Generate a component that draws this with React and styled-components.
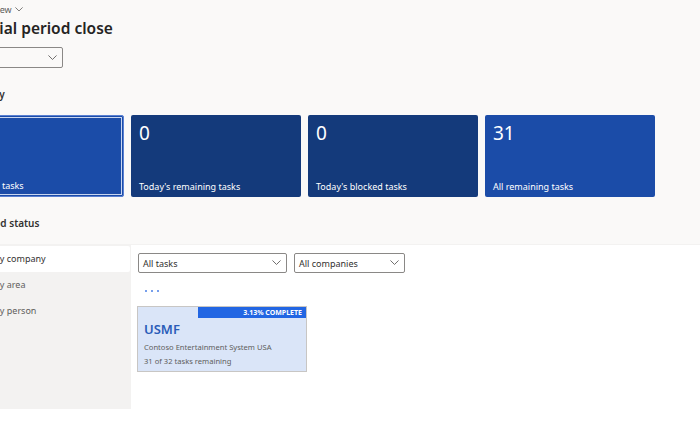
import React from "react";
import styled, { createGlobalStyle } from "styled-components";

const GlobalStyle = createGlobalStyle`
  html, body {
    margin: 0;
    padding: 0;
    background: #faf9f8;
  }
  body {
    font-family: "Noto Sans", "Open Sans", sans-serif;
    color: #323130;
  }
`;

const Viewport = styled.div`
  width: 700px;
  height: 441px;
  overflow: hidden;
  display: flex;
  flex-direction: column;
`;

/* the workspace is scrolled a little to the right, so its left edge sits off screen */
const Content = styled.div`
  margin-left: -60px;
  width: 760px;
  flex: 1;
  display: flex;
  flex-direction: column;
`;

const Breadcrumb = styled.div`
  margin: 3px 0 0 12px;
  height: 13px;
  line-height: 13px;
  font-size: 9px;
  color: #605e5c;
  display: flex;
  align-items: center;
  gap: 3px;
`;

const Title = styled.h1`
  margin: 0 0 0 10px;
  height: 24px;
  line-height: 24px;
  font-size: 15.5px;
  font-weight: 600;
  color: #252423;
`;

const Select = styled.div`
  box-sizing: border-box;
  width: ${(p) => p.$width}px;
  height: ${(p) => p.$height || 20}px;
  border: 1px solid #8a8886;
  border-radius: 2px;
  background: #fff;
  display: flex;
  align-items: center;
  justify-content: space-between;
  padding: 0 5px 0 4px;
  font-size: 9px;
  color: #323130;
`;

const ViewSelect = styled(Select)`
  margin-top: 7px;
  background: #faf9f8;
`;

const SectionHeading = styled.h2`
  margin: ${(p) => p.$top}px 0 0 ${(p) => p.$offset || 0}px;
  height: 18px;
  line-height: 18px;
  font-size: 10px;
  font-weight: 600;
  color: #323130;
`;

const Tiles = styled.div`
  margin: 12px 0 0 14px;
  display: flex;
  gap: 7px;
`;

const Tile = styled.div`
  box-sizing: border-box;
  width: 170px;
  height: 82px;
  border-radius: 2px;
  background: ${(p) => (p.$light ? "#1b4ca8" : "#143a7b")};
  color: #fff;
  padding: 5px 8px 4px;
  display: flex;
  flex-direction: column;
  justify-content: space-between;
  ${(p) =>
    p.$focused &&
    `
    border: 1px solid #5a80d2;
    box-shadow: inset 0 0 0 1px #1b4ca8, inset 0 0 0 2px #c9d6f1;
  `}
`;

const TileCount = styled.div`
  font-size: 19px;
  line-height: 26px;
  height: 26px;
`;

const TileLabel = styled.div`
  font-size: 9px;
  line-height: 12px;
`;

const StatusArea = styled.div`
  margin-top: 12px;
  flex: 1;
  background: #fff;
  border-top: 1px solid #f3f2f1;
  display: flex;
  align-items: flex-start;
`;

const SideNav = styled.div`
  box-sizing: border-box;
  width: 191px;
  height: 164px;
  background: #f3f2f1;
  padding: 1px 1px 0 0;
  display: flex;
  flex-direction: column;
`;

const NavItem = styled.div`
  height: 26px;
  line-height: 26px;
  padding-left: 54px;
  font-size: 9px;
  border-radius: 2px;
  color: ${(p) => (p.$active ? "#323130" : "#605e5c")};
  background: ${(p) => (p.$active ? "#fff" : "transparent")};
`;

const Panel = styled.div`
  padding: 8px 0 0 6px;
  display: flex;
  flex-direction: column;
`;

const Filters = styled.div`
  display: flex;
  gap: 7px;
  padding-left: 1px;
`;

const More = styled.div`
  margin: 8px 0 0 8px;
  height: 18px;
  display: flex;
  align-items: flex-end;
  gap: 4px;
  padding-bottom: 7px;
  box-sizing: border-box;
`;

const Dot = styled.span`
  width: 2px;
  height: 2px;
  border-radius: 1px;
  background: #4a7fe6;
`;

const Card = styled.div`
  box-sizing: border-box;
  margin-top: 7px;
  width: 170px;
  height: 66px;
  background: #dae5f8;
  border: 1px solid #c8c6c4;
  display: flex;
  flex-direction: column;
`;

const CardTop = styled.div`
  display: flex;
  justify-content: flex-end;
`;

const Progress = styled.div`
  width: 108px;
  height: 11px;
  line-height: 11px;
  background: #2266e3;
  color: #fff;
  font-size: 7px;
  font-weight: 700;
  text-align: right;
  padding-right: 4px;
  box-sizing: border-box;
`;

const Company = styled.div`
  margin: 3px 0 0 6px;
  font-size: 13px;
  line-height: 16px;
  font-weight: 600;
  color: #2a5cb8;
`;

const CardLine = styled.div`
  margin: ${(p) => p.$top || 0}px 0 0 6px;
  font-size: 7.6px;
  line-height: 10px;
  color: #605e5c;
`;

const Chevron = ({ size = 9, color = "#605e5c" }) => (
  <svg width={size} height={size * 0.6} viewBox="0 0 10 6" fill="none">
    <polyline points="0.5,0.5 5,5 9.5,0.5" stroke={color} strokeWidth="1" />
  </svg>
);

const tiles = [
  { count: "1", label: "Past due tasks", light: true, focused: true },
  { count: "0", label: "Today's remaining tasks" },
  { count: "0", label: "Today's blocked tasks" },
  { count: "31", label: "All remaining tasks", light: true },
];

export default function App() {
  return (
    <Viewport>
      <GlobalStyle />
      <Content>
        <Breadcrumb>
          Standard view <Chevron size={8} />
        </Breadcrumb>
        <Title>Financial period close</Title>
        <ViewSelect $width={123} $height={21}>
          <span>Current</span>
          <Chevron />
        </ViewSelect>

        <SectionHeading $top={17} $offset={18}>Summary</SectionHeading>
        <Tiles>
          {tiles.map((t) => (
            <Tile key={t.label} $light={t.light} $focused={t.focused}>
              <TileCount>{t.count}</TileCount>
              <TileLabel>{t.label}</TileLabel>
            </Tile>
          ))}
        </Tiles>

        <SectionHeading $top={17} $offset={35}>Period status</SectionHeading>
        <StatusArea>
          <SideNav>
            <NavItem $active>By company</NavItem>
            <NavItem>By area</NavItem>
            <NavItem>By person</NavItem>
          </SideNav>
          <Panel>
            <Filters>
              <Select $width={149}>
                <span>All tasks</span>
                <Chevron />
              </Select>
              <Select $width={111}>
                <span>All companies</span>
                <Chevron />
              </Select>
            </Filters>
            <More>
              <Dot />
              <Dot />
              <Dot />
            </More>
            <Card>
              <CardTop>
                <Progress>3.13% COMPLETE</Progress>
              </CardTop>
              <Company>USMF</Company>
              <CardLine $top={5}>Contoso Entertainment System USA</CardLine>
              <CardLine $top={4}>31 of 32 tasks remaining</CardLine>
            </Card>
          </Panel>
        </StatusArea>
      </Content>
    </Viewport>
  );
}
